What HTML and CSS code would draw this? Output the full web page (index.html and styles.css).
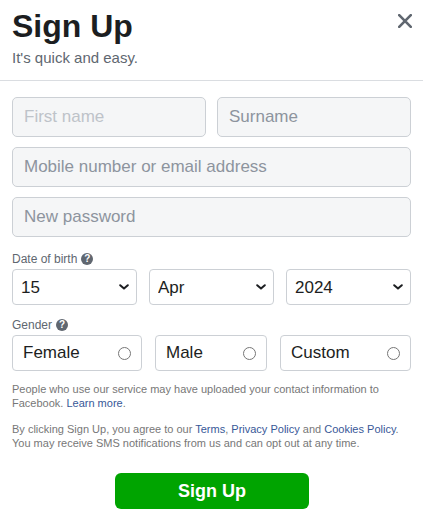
FILE: index.html
```html
<!DOCTYPE html>
<html lang="en">
<head>
<meta charset="utf-8">
<title>Sign Up</title>
<link rel="stylesheet" href="styles.css">
</head>
<body>
<div class="page">
  <header class="head">
    <div class="titles">
      <h1 class="title">Sign Up</h1>
      <p class="sub">It's quick and easy.</p>
    </div>
    <button class="close" type="button" aria-label="Close">
      <svg width="14" height="14" viewBox="0 0 14 14"><path d="M1.2 1.2L12.8 12.8M12.8 1.2L1.2 12.8" stroke="#606770" stroke-width="2.6" stroke-linecap="round"/></svg>
    </button>
  </header>
  <form class="form">
    <div class="name-row">
      <input class="field field-first" type="text" placeholder="First name">
      <input class="field" type="text" placeholder="Surname">
    </div>
    <input class="field" type="text" placeholder="Mobile number or email address">
    <input class="field" type="password" placeholder="New password">

    <div class="label label-dob">Date of birth <span class="help">?</span></div>
    <div class="selects">
      <div class="sel-wrap">
        <select class="sel"><option>15</option></select>
        <svg class="chev" width="10" height="6" viewBox="0 0 10 6"><path d="M1.2 1.2L5 4.6L8.8 1.2" fill="none" stroke="#1c1e21" stroke-width="2" stroke-linecap="round" stroke-linejoin="round"/></svg>
      </div>
      <div class="sel-wrap">
        <select class="sel"><option>Apr</option></select>
        <svg class="chev" width="10" height="6" viewBox="0 0 10 6"><path d="M1.2 1.2L5 4.6L8.8 1.2" fill="none" stroke="#1c1e21" stroke-width="2" stroke-linecap="round" stroke-linejoin="round"/></svg>
      </div>
      <div class="sel-wrap">
        <select class="sel"><option>2024</option></select>
        <svg class="chev" width="10" height="6" viewBox="0 0 10 6"><path d="M1.2 1.2L5 4.6L8.8 1.2" fill="none" stroke="#1c1e21" stroke-width="2" stroke-linecap="round" stroke-linejoin="round"/></svg>
      </div>
    </div>

    <div class="label label-gender">Gender <span class="help">?</span></div>
    <div class="genders">
      <label class="gender"><span>Female</span><input class="radio" type="radio" name="sex"></label>
      <label class="gender"><span>Male</span><input class="radio" type="radio" name="sex"></label>
      <label class="gender"><span>Custom</span><input class="radio" type="radio" name="sex"></label>
    </div>

    <p class="legal legal-first">People who use our service may have uploaded your contact information to Facebook. <a href="#" class="link">Learn more</a>.</p>
    <p class="legal">By clicking Sign Up, you agree to our <a href="#" class="link">Terms</a>, <a href="#" class="link">Privacy Policy</a> and <a href="#" class="link">Cookies Policy</a>. You may receive SMS notifications from us and can opt out at any time.</p>

    <div class="submit-row">
      <button class="submit" type="button">Sign Up</button>
    </div>
  </form>
</div>
</body>
</html>
```
FILE: styles.css
```css
* { box-sizing: border-box; }
html, body { margin: 0; padding: 0; background: #fff; }
body { font-family: "Liberation Sans", Arial, Helvetica, sans-serif; color: #1c1e21; }

.page { width: 423px; }

.head {
  display: flex;
  justify-content: space-between;
  align-items: flex-start;
  padding: 7px 11px 10px 12px;
  border-bottom: 1px solid #dadde1;
}
.title {
  margin: 0;
  font-size: 32px;
  line-height: 38px;
  font-weight: 700;
  color: #1c1e21;
}
.sub {
  margin: 1px 0 0;
  font-size: 15px;
  line-height: 24px;
  color: #606770;
}
.close {
  margin-top: 7px;
  padding: 0;
  border: 0;
  background: none;
  width: 14px;
  height: 14px;
  display: block;
}
.close svg { display: block; }

.form {
  display: flex;
  flex-direction: column;
  padding: 16px 12px 0;
}
.name-row {
  display: flex;
  gap: 11px;
}
.field {
  display: block;
  width: 100%;
  height: 40px;
  margin: 0 0 10px;
  padding: 0 11px;
  border: 1px solid #ccd0d5;
  border-radius: 5px;
  background: #f5f6f7;
  font-family: "Liberation Sans", Arial, sans-serif;
  font-size: 17px;
  color: #1c1e21;
  outline: none;
}
.name-row .field { flex: 1 1 0; min-width: 0; }
.field::placeholder { color: #8d949e; }
.field-first::placeholder { color: #bec3c9; }

.label {
  display: flex;
  align-items: center;
  gap: 4px;
  font-size: 12px;
  line-height: 20px;
  color: #606770;
}
.label-dob { margin-top: 2px; }
.label-gender { margin-top: 10px; }
.help {
  display: inline-flex;
  align-items: center;
  justify-content: center;
  width: 12px;
  height: 12px;
  border-radius: 50%;
  background: #606770;
  color: #fff;
  font-size: 10px;
  font-weight: 700;
  line-height: 1;
}

.selects {
  display: grid;
  grid-template-columns: 1fr 1fr 1fr;
  gap: 12px;
}
.sel-wrap { position: relative; }
.sel {
  display: block;
  width: 100%;
  height: 36px;
  padding: 0 24px 0 8px;
  border: 1px solid #ccd0d5;
  border-radius: 4px;
  background: #fff;
  font-family: "Liberation Sans", Arial, sans-serif;
  font-size: 17px;
  color: #1c1e21;
  appearance: none;
  -webkit-appearance: none;
  outline: none;
}
.chev {
  position: absolute;
  right: 8px;
  top: 15px;
  pointer-events: none;
}

.genders {
  display: grid;
  grid-template-columns: 130fr 112fr 131fr;
  gap: 13px;
}
.gender {
  display: flex;
  align-items: center;
  justify-content: space-between;
  height: 36px;
  padding: 0 7px 0 10px;
  border: 1px solid #ccd0d5;
  border-radius: 4px;
  font-size: 17px;
  color: #1c1e21;
}
.radio { margin: 0 3px 0 5px; }

.legal {
  margin: 12px 0 0;
  font-size: 11px;
  line-height: 14px;
  color: #777;
}
.legal-first { margin-top: 11px; }
.link { color: #385898; text-decoration: none; }

.submit-row {
  display: flex;
  justify-content: center;
  padding: 23px 0 0;
}
.submit {
  width: 194px;
  height: 36px;
  margin-left: 1px;
  border: 0;
  border-radius: 6px;
  background: #00a400;
  color: #fff;
  font-family: "Liberation Sans", Arial, sans-serif;
  font-size: 18px;
  font-weight: 700;
}
```
